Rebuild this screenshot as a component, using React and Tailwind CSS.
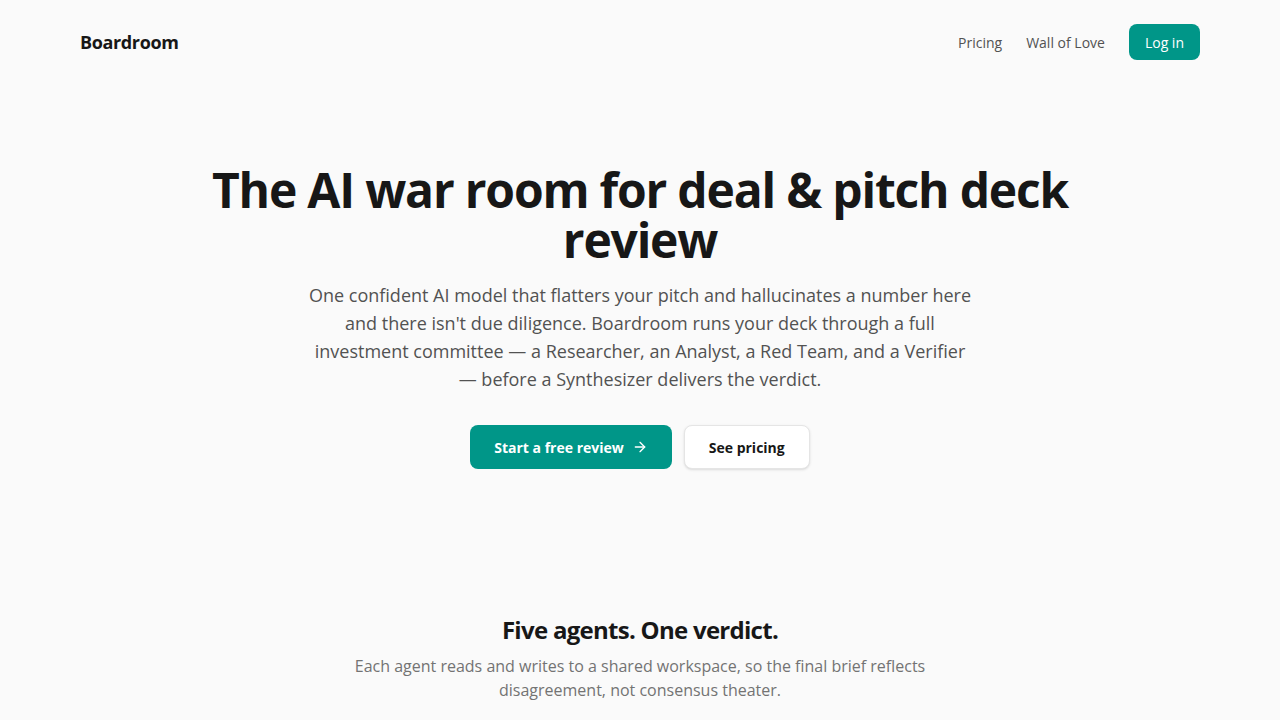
import { ArrowRight } from "lucide-react"

const font = { fontFamily: '"Open Sans", "Liberation Sans", sans-serif' }

function Header() {
  return (
    <header className="mx-auto flex max-w-[1120px] items-center justify-between py-6">
      <a href="#" className="text-[18px] font-bold tracking-[-0.02em] text-[#171717]">
        Boardroom
      </a>
      <nav className="flex items-center">
        <a href="#" className="text-[14px] text-[#525252]">Pricing</a>
        <a href="#" className="ml-6 text-[14px] text-[#525252]">Wall of Love</a>
        <a
          href="#"
          className="ml-6 flex h-9 items-center rounded-lg bg-[#009688] px-4 text-[14px] text-white"
        >
          Log in
        </a>
      </nav>
    </header>
  )
}

function Hero() {
  return (
    <section className="mx-auto flex max-w-[900px] flex-col items-center pt-[81px] text-center">
      <h1 className="text-[48px] font-bold leading-[50px] tracking-[-0.025em] text-[#171717]">
        The AI war room for deal &amp; pitch deck review
      </h1>
      <p className="mt-4 max-w-[672px] text-[18px] leading-[28px] text-[#525252]">
        One confident AI model that flatters your pitch and hallucinates a number here and there
        isn't due diligence. Boardroom runs your deck through a full investment committee — a
        Researcher, an Analyst, a Red Team, and a Verifier — before a Synthesizer delivers the
        verdict.
      </p>
      <div className="mt-8 flex items-center gap-3">
        <a
          href="#"
          className="flex h-11 items-center gap-2 rounded-lg bg-[#009688] px-6 text-[14px] font-bold text-white"
        >
          Start a free review
          <ArrowRight className="h-4 w-4" strokeWidth={2} />
        </a>
        <a
          href="#"
          className="flex h-11 items-center rounded-lg border border-[#e5e5e5] bg-white px-6 text-[14px] font-bold text-[#171717] shadow-sm"
        >
          See pricing
        </a>
      </div>
    </section>
  )
}

function Agents() {
  return (
    <section className="mx-auto flex max-w-[1120px] flex-col items-center pt-[145px] text-center">
      <h2 className="text-[24px] font-bold leading-[32px] tracking-[-0.03em] text-[#171717]">
        Five agents. One verdict.
      </h2>
      <p className="mt-2 max-w-[576px] text-[16px] leading-[24px] text-[#737373]">
        Each agent reads and writes to a shared workspace, so the final brief reflects
        disagreement, not consensus theater.
      </p>
    </section>
  )
}

export default function App() {
  return (
    <div className="min-h-screen bg-[#fafafa]" style={font}>
      <Header />
      <Hero />
      <Agents />
    </div>
  )
}
